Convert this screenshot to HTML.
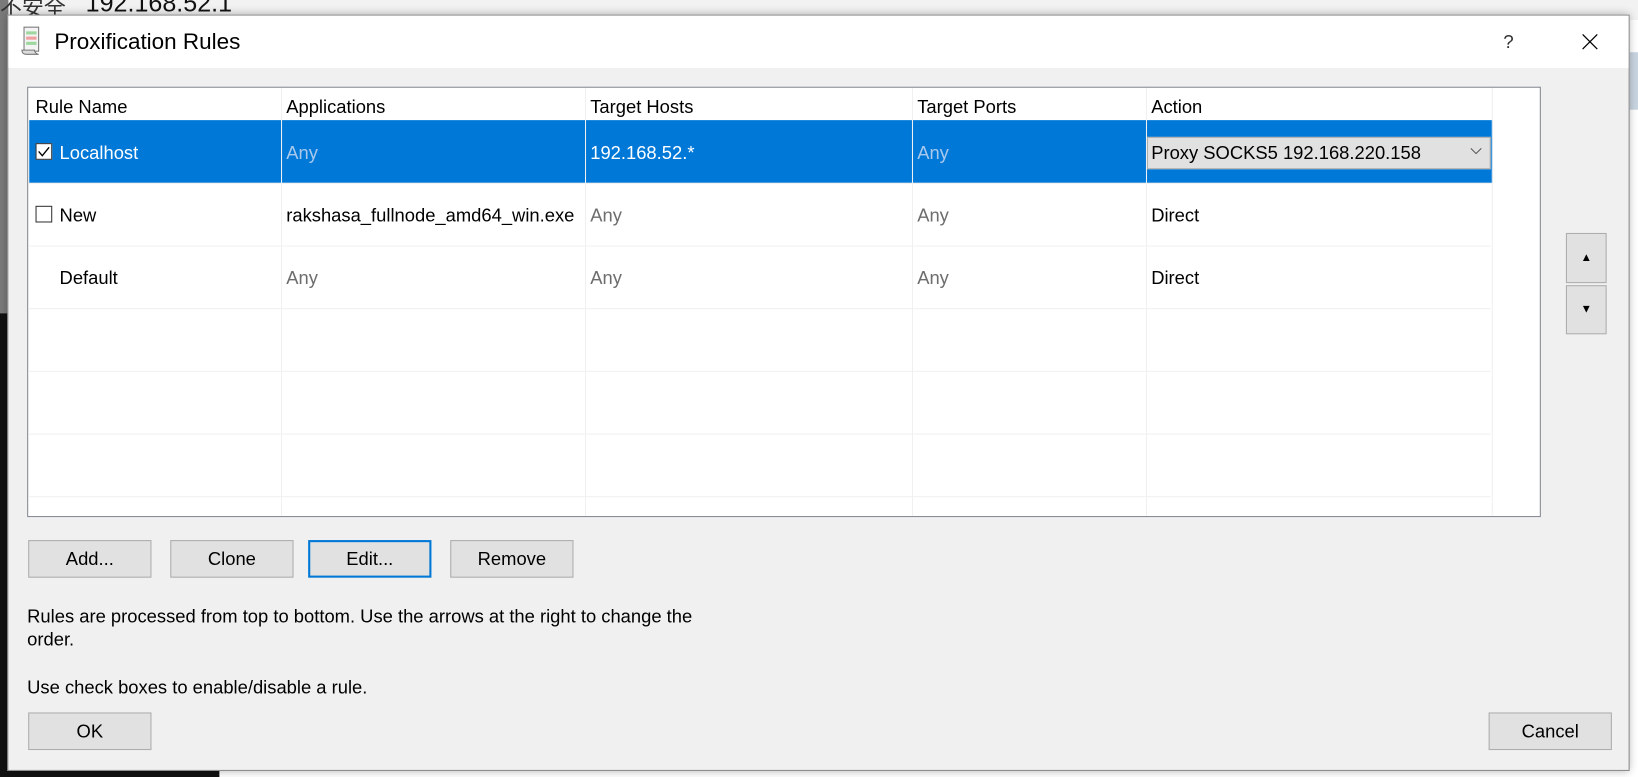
<!DOCTYPE html>
<html><head><meta charset="utf-8"><style>
html,body{margin:0;padding:0;width:1638px;height:777px;overflow:hidden;background:#fff}
#w{position:absolute;left:0;top:0;width:1568px;height:744px;transform:scale(1.04464);transform-origin:0 0;font-family:"Liberation Sans","Noto Sans CJK SC",sans-serif;font-size:17.6px;color:#000}
.a{position:absolute}
.dlg{left:7px;top:14px;width:1553px;height:724px;background:#f0f0f0;border:1px solid #888;box-sizing:border-box;box-shadow:0 0 8px rgba(0,0,0,.3)}
.tb{left:0;top:0;right:0;height:50px;background:#fff}
.tbl{left:18px;top:68px;width:1449px;height:412px;background:#fff;border:1px solid #828790;box-sizing:border-box;overflow:hidden}
.vl{top:0;bottom:0;width:1px;background:#f0f0f0}
.hl{left:0;width:1400px;height:1px;background:#f0f0f0}
.t{position:absolute;white-space:nowrap;line-height:22px}
.g{color:#6d6d6d}
.btn{position:absolute;width:118px;height:36px;background:#e1e1e1;border:1px solid #adadad;box-sizing:border-box;text-align:center;line-height:34px}
.cb{position:absolute;width:16px;height:16px;border:1px solid #333;background:#fff;box-sizing:border-box}
</style></head><body>
<div style="position:absolute;left:0;top:0;width:1638px;height:20px;background:#f2f2f2"></div>
<div id="w">
  <div class="a" style="left:0;top:0;width:8px;height:744px;background:#7a7a7a"></div>
  <div class="a" style="left:0;top:300px;width:8px;height:444px;background:#111"></div>
  <div class="a" style="left:0;top:-8px;font-size:21px;color:#333">不安全</div>
  <div class="a" style="left:82px;top:-10px;font-size:24px;color:#111">192.168.52.1</div>
  <div class="a" style="left:0;top:738px;width:210px;height:6px;background:#111"></div>
  <div class="a" style="left:1560px;top:50px;width:8px;height:55px;background:#c8d4e0"></div>
  <div class="a dlg">
    <div class="a tb">
      <svg class="a" style="left:12px;top:10px" width="20" height="28" viewBox="0 0 20 28"><rect x="3" y="1" width="14" height="23" fill="#f4f4f4" stroke="#777"/><rect x="5" y="5" width="10" height="3" fill="#9fd89f"/><rect x="5" y="10" width="10" height="3" fill="#f0a0a0"/><rect x="5" y="15" width="10" height="3" fill="#9fd89f"/><path d="M1 23 Q1 27 5 27 L17 27 Q13 26 13 23Z" fill="#ddd" stroke="#777"/></svg>
      <div class="t" style="left:44px;top:14px;font-size:21.5px">Proxification Rules</div>
      <div class="t" style="left:1431px;top:14px;font-size:18px;color:#333">?</div>
      <svg class="a" style="left:1506px;top:17px" width="16" height="16"><path d="M1 1L15 15M15 1L1 15" stroke="#000" stroke-width="1.2"/></svg>
    </div>
    <div class="a tbl">
      <div class="a" style="left:1px;top:31px;width:1401px;height:60px;background:#0078d7"></div>
      <div class="a vl" style="left:242px"></div><div class="a vl" style="left:533px"></div><div class="a vl" style="left:846px"></div><div class="a vl" style="left:1070px"></div><div class="a vl" style="left:1401px"></div>
      <div class="a hl" style="top:91px"></div><div class="a hl" style="top:151px"></div><div class="a hl" style="top:211px"></div><div class="a hl" style="top:271px"></div><div class="a hl" style="top:331px"></div><div class="a hl" style="top:391px"></div>
      <div class="t" style="left:7px;top:7px">Rule Name</div>
      <div class="t" style="left:247px;top:7px">Applications</div>
      <div class="t" style="left:538px;top:7px">Target Hosts</div>
      <div class="t" style="left:851px;top:7px">Target Ports</div>
      <div class="t" style="left:1075px;top:7px">Action</div>
      <div class="cb" style="left:7px;top:53px"></div>
      <svg class="a" style="left:8px;top:54px" width="14" height="14"><path d="M2 7L5.5 11L12 3" stroke="#000" stroke-width="1.3" fill="none"/></svg>
      <div class="t" style="left:30px;top:51px;color:#fff">Localhost</div>
      <div class="t" style="left:247px;top:51px;color:#a8c8ec">Any</div>
      <div class="t" style="left:538px;top:51px;color:#fff">192.168.52.*</div>
      <div class="t" style="left:851px;top:51px;color:#a8c8ec">Any</div>
      <div class="a" style="left:1071px;top:47px;width:329px;height:31px;background:#e1e1e1;border:1px solid #adadad;box-sizing:border-box"></div>
      <div class="t" style="left:1075px;top:51px">Proxy SOCKS5 192.168.220.158</div>
      <svg class="a" style="left:1380px;top:57px" width="12" height="8"><path d="M1 1L6 6L11 1" stroke="#555" fill="none"/></svg>
      <div class="cb" style="left:7px;top:113px;border-color:#333"></div>
      <div class="t" style="left:30px;top:111px">New</div>
      <div class="t" style="left:247px;top:111px">rakshasa_fullnode_amd64_win.exe</div>
      <div class="t g" style="left:538px;top:111px">Any</div>
      <div class="t g" style="left:851px;top:111px">Any</div>
      <div class="t" style="left:1075px;top:111px">Direct</div>
      <div class="t" style="left:30px;top:171px">Default</div>
      <div class="t g" style="left:247px;top:171px">Any</div>
      <div class="t g" style="left:538px;top:171px">Any</div>
      <div class="t g" style="left:851px;top:171px">Any</div>
      <div class="t" style="left:1075px;top:171px">Direct</div>
    </div>
    <div class="btn" style="left:1491px;top:208px;width:39px;height:48px;line-height:46px;font-size:11px">▲</div>
    <div class="btn" style="left:1491px;top:258px;width:39px;height:47px;line-height:45px;font-size:11px">▼</div>
    <div class="btn" style="left:19px;top:502px">Add...</div>
    <div class="btn" style="left:155px;top:502px">Clone</div>
    <div class="btn" style="left:287px;top:502px;border:2px solid #0078d7;line-height:32px">Edit...</div>
    <div class="btn" style="left:423px;top:502px">Remove</div>
    <div class="t" style="left:18px;top:564px">Rules are processed from top to bottom. Use the arrows at the right to change the</div>
    <div class="t" style="left:18px;top:586px">order.</div>
    <div class="t" style="left:18px;top:632px">Use check boxes to enable/disable a rule.</div>
    <div class="btn" style="left:19px;top:667px">OK</div>
    <div class="btn" style="left:1417px;top:667px">Cancel</div>
  </div>
</div>
</body></html>
